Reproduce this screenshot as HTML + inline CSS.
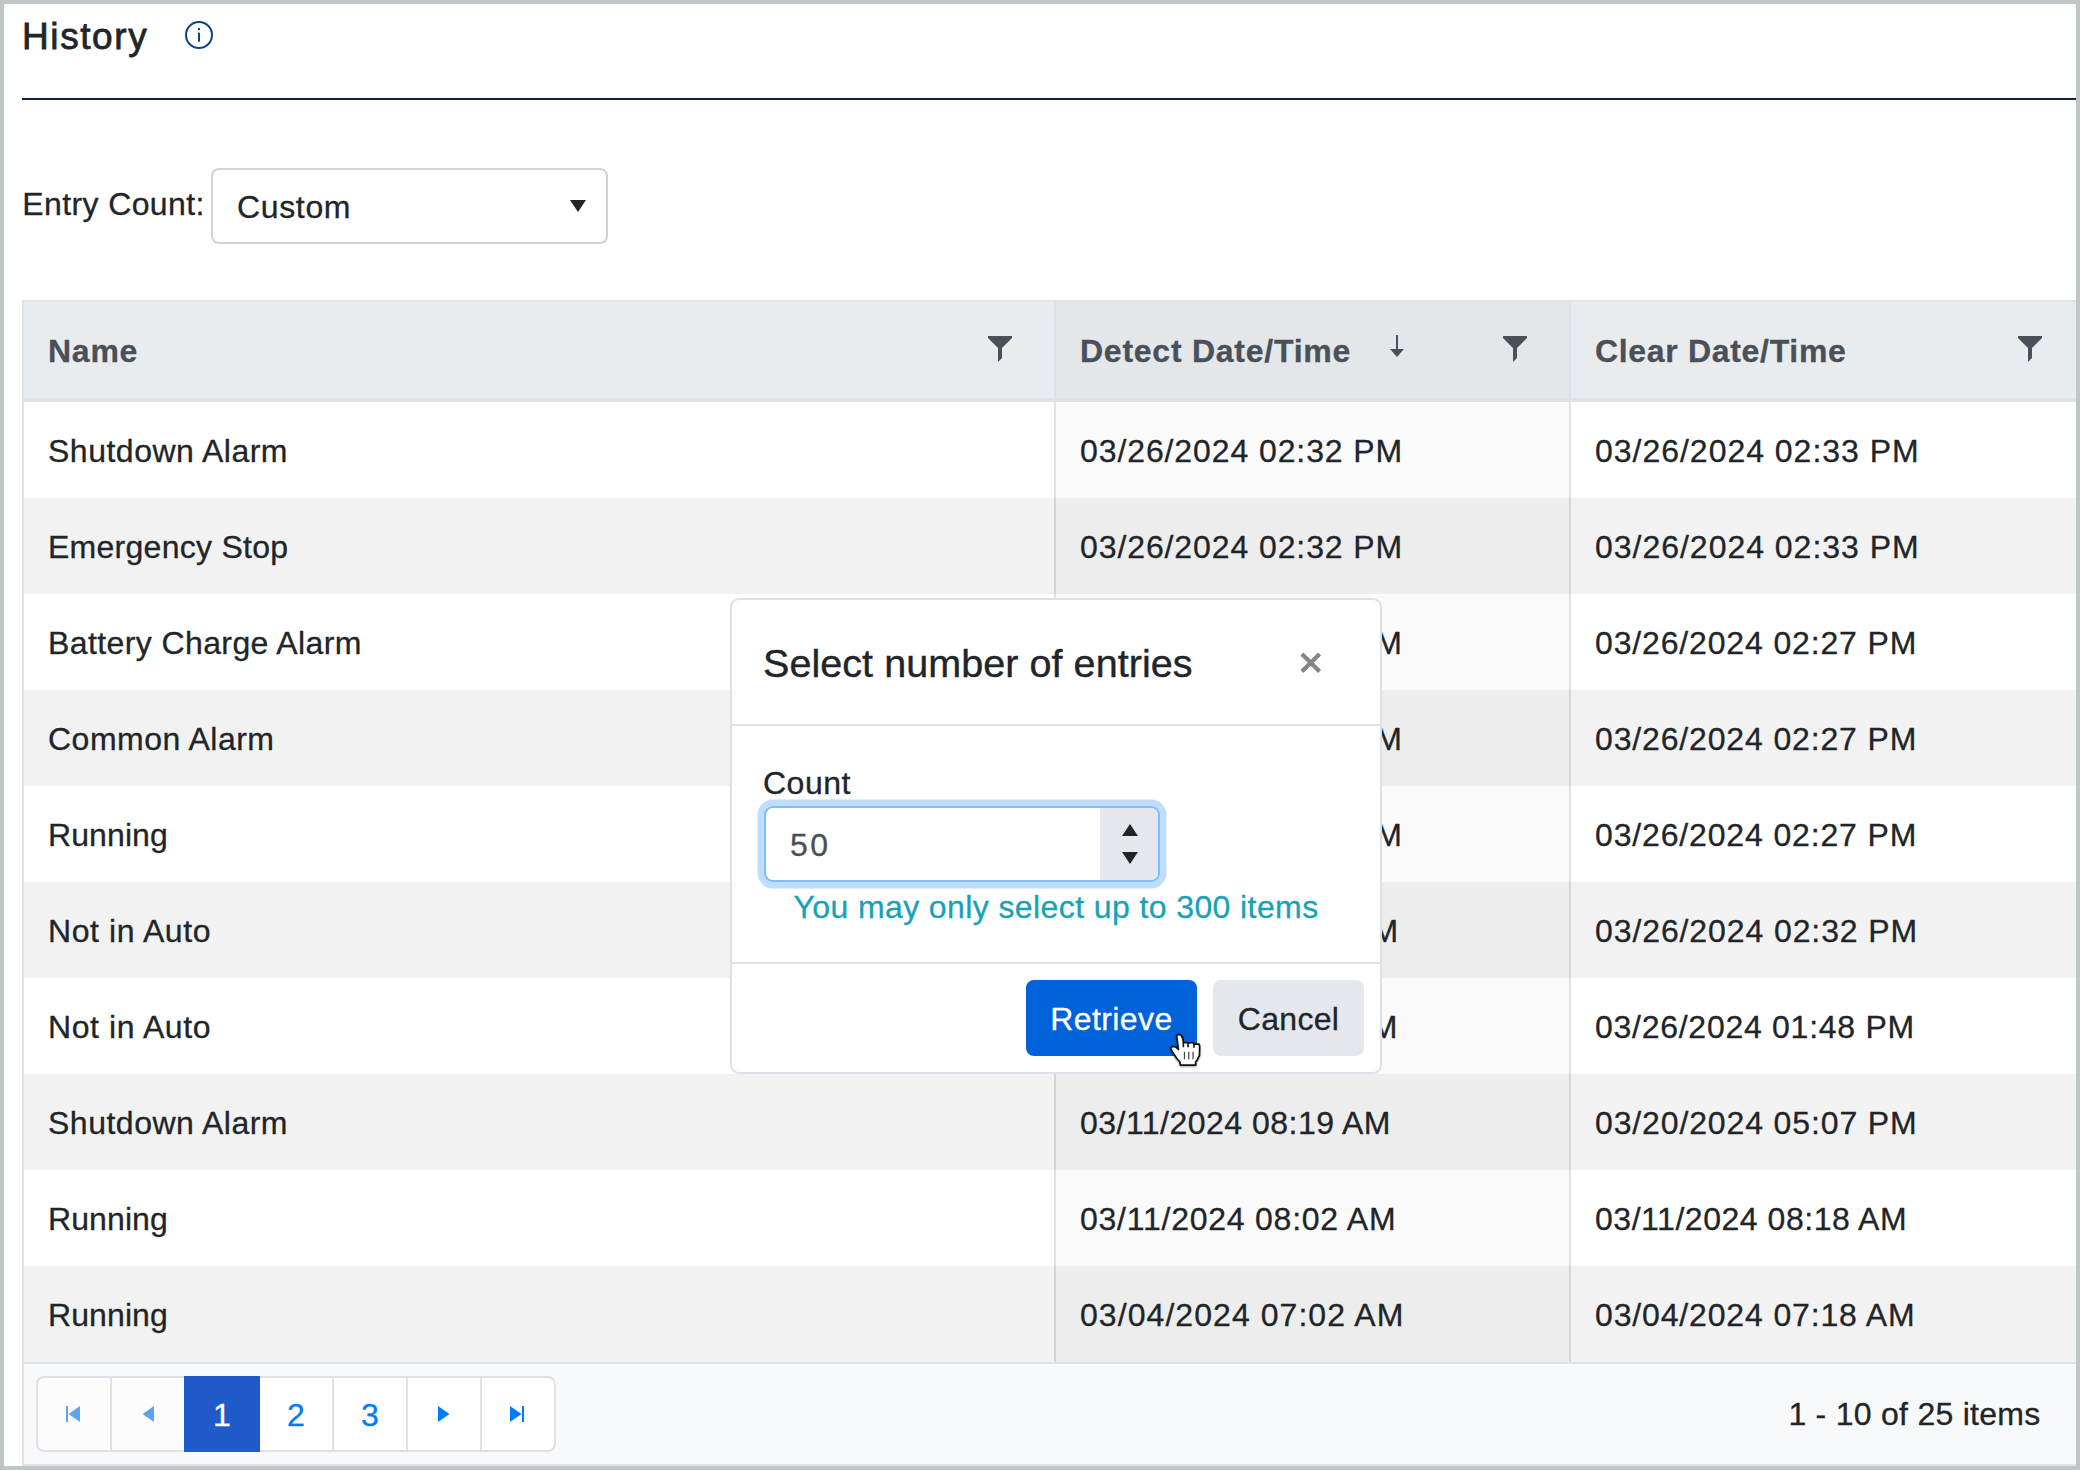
<!DOCTYPE html>
<html lang="en">
<head>
<meta charset="utf-8">
<title>History</title>
<style>
*{box-sizing:border-box;margin:0;padding:0}
html,body{width:2080px;height:1470px;overflow:hidden}
body{background:#c0c5c8;font-family:"Liberation Sans",sans-serif;font-size:32px;color:#212529;position:relative;-webkit-text-stroke-width:.3px}
#page{position:absolute;left:4px;top:4px;width:2072px;height:1462px;background:#fff;overflow:hidden}
.abs{position:absolute;white-space:nowrap}
/* title */
#title{left:18px;top:11px;font-size:37px;line-height:44px;letter-spacing:1.6px;-webkit-text-stroke:.8px #212529}
#info{left:180px;top:16px;width:30px;height:30px}
#hr{left:18px;top:94px;width:2060px;height:2px;background:#0d2240}
/* entry count */
#eclabel{left:18.200px;top:180px;line-height:40px;letter-spacing:.4px}
#select{left:207px;top:164px;width:397px;height:76px;border:2px solid #ced4da;border-radius:8px;background:#fff}
#select span{position:absolute;left:24px;top:17px;line-height:40px;letter-spacing:.65px}
#select i{position:absolute;left:357px;top:30px;width:0;height:0;border-left:8px solid transparent;border-right:8px solid transparent;border-top:12px solid #212529}
/* grid */
#grid{left:18px;top:296px;width:2060px;height:1166px;border:2px solid #e2e3e3;border-right:0;background:#fff}
table{border-collapse:separate;border-spacing:0;table-layout:fixed;width:2160px}
th,td{height:96px;padding:0 24px;text-align:left;vertical-align:middle;font-weight:400;border-left:2px solid #dee2e6;white-space:nowrap;position:relative}
th:first-child,td:first-child{border-left:0}
th{-webkit-text-stroke-width:.3px;height:100px;background:#e9ecef;color:#495057;font-weight:700;letter-spacing:.75px;border-bottom:4px solid #dee2e6;padding-top:2px}
th.sorted{background:#e4e7ea}
td{border-left-color:#e1e2e2}
tr.alt td{background:#f2f2f2;border-left-color:#d4d5d6}
td.sorted{background:#fafafa}
tr.alt td.sorted{background:#ededed}
td span{position:relative;top:1px;letter-spacing:.5px}
td.d span{letter-spacing:.9px}
th:last-child{letter-spacing:.68px}
.filter{position:absolute;right:38px;top:30px;width:32px;height:32px}
.sorticon{position:absolute;left:333px;top:33px;width:16px;height:24px}
/* pager */
#pagerbar{left:0;top:1060px;width:2058px;height:102px;background:#f8f9fa;border-top:2px solid #dee2e6}
#pager{left:12px;top:12px;height:76px;display:flex}
#pager div{width:76px;height:76px;border:2px solid #dee2e6;margin-left:-2px;background:#fff;color:#007bff;text-align:center;line-height:74px;position:relative}
#pager div:first-child{margin-left:0;border-radius:8px 0 0 8px}
#pager div:last-child{border-radius:0 8px 8px 0}
#pager div.dis{background:#fcfcfd}
#pager div.sel{background:#205bca;border-color:#205bca;color:#fff;z-index:2}
#pager svg{position:absolute;left:20px;top:20px;width:32px;height:32px}
#pinfo{right:41.500px;top:30px;line-height:40px;letter-spacing:.27px}
/* modal */
#modal{left:726px;top:594px;width:652px;height:476px;background:#fff;border:2px solid #dde0e5;border-radius:9px}
#mtitle{left:31px;top:38.500px;letter-spacing:.06px;-webkit-text-stroke:.4px #212529;font-size:39.5px;line-height:48px}
#mclose{left:566.500px;top:50.500px;width:23.500px;height:23.500px}
.mdiv{left:0;width:648px;height:2px;background:#dee2e6}
#mcount{left:31px;top:162.500px;letter-spacing:.5px;line-height:40px}
#minput{left:32px;top:206px;width:396px;height:76px;border:2px solid #80bdff;border-radius:9px;background:#fff;box-shadow:0 0 0 6.4px rgba(0,123,255,.25);overflow:hidden}
#minput span{position:absolute;left:24px;top:17px;line-height:40px;color:#495057;letter-spacing:2.5px}
#mspin{position:absolute;right:0;top:0;width:58px;height:72px;background:#e4e7eb}
#mspin i{position:absolute;left:22px;width:0;height:0;border-left:8px solid transparent;border-right:8px solid transparent}
#mspin i.u{top:16px;border-bottom:12px solid #212529}
#mspin i.d{top:44px;border-top:12px solid #212529}
#mhint{left:0;width:648px;text-align:center;top:286.5px;line-height:40px;color:#17a2b8;letter-spacing:.4px}
.btn{height:76px;border-radius:8px;line-height:79px;text-align:center}
#bret{left:294px;top:380px;width:171px;background:#0062d8;color:#fff;letter-spacing:.4px}
#bcan{left:481px;top:380px;width:151px;background:#e4e7eb;color:#212529;letter-spacing:.3px}
#cursor{left:1165px;top:1029.300px;width:33.330px;height:34.290px;filter:drop-shadow(0 1px 1px rgba(0,0,0,.35))}
</style>
</head>
<body>
<div id="page">
  <div class="abs" id="title">History</div>
  <svg class="abs" id="info" viewBox="0 0 30 30"><circle cx="15" cy="15" r="13" fill="none" stroke="#084487" stroke-width="2"/><rect x="14" y="12.700" width="2" height="9" fill="#084487"/><rect x="14" y="8.100" width="2" height="2" fill="#084487"/></svg>
  <div class="abs" id="hr"></div>
  <div class="abs" id="eclabel">Entry Count:</div>
  <div class="abs" id="select"><span>Custom</span><i></i></div>

  <div class="abs" id="grid">
    <table>
      <colgroup><col style="width:1030px"><col style="width:515px"><col style="width:615px"></colgroup>
      <thead><tr>
        <th>Name<svg class="filter" viewBox="0 0 512 512"><path fill="#495057" d="M64 64v32l160 160v224l64-64V256L448 96V64z"/></svg></th>
        <th class="sorted">Detect Date/Time<svg class="sorticon" viewBox="0 0 16 24"><path fill="#495057" d="M7 0h2v14h6l-7 8-7-8h6z"/></svg><svg class="filter" viewBox="0 0 512 512"><path fill="#495057" d="M64 64v32l160 160v224l64-64V256L448 96V64z"/></svg></th>
        <th>Clear Date/Time<svg class="filter" style="right:auto;left:443px" viewBox="0 0 512 512"><path fill="#495057" d="M64 64v32l160 160v224l64-64V256L448 96V64z"/></svg></th>
      </tr></thead>
      <tbody>
        <tr><td><span>Shutdown Alarm</span></td><td class="d sorted"><span style="letter-spacing:0.90px">03/26/2024 02:32 PM</span></td><td class="d"><span style="letter-spacing:0.98px">03/26/2024 02:33 PM</span></td></tr>
        <tr class="alt"><td><span style="letter-spacing:.27px">Emergency Stop</span></td><td class="d sorted"><span style="letter-spacing:0.90px">03/26/2024 02:32 PM</span></td><td class="d"><span style="letter-spacing:0.98px">03/26/2024 02:33 PM</span></td></tr>
        <tr><td><span style="letter-spacing:.4px">Battery Charge Alarm</span></td><td class="d sorted"><span style="letter-spacing:0.88px">03/26/2024 02:26 PM</span></td><td class="d"><span style="letter-spacing:0.85px">03/26/2024 02:27 PM</span></td></tr>
        <tr class="alt"><td><span>Common Alarm</span></td><td class="d sorted"><span style="letter-spacing:0.88px">03/26/2024 02:26 PM</span></td><td class="d"><span style="letter-spacing:0.85px">03/26/2024 02:27 PM</span></td></tr>
        <tr><td><span style="letter-spacing:.1px">Running</span></td><td class="d sorted"><span style="letter-spacing:0.88px">03/26/2024 02:26 PM</span></td><td class="d"><span style="letter-spacing:0.85px">03/26/2024 02:27 PM</span></td></tr>
        <tr class="alt"><td><span style="letter-spacing:.6px">Not in Auto</span></td><td class="d sorted"><span style="letter-spacing:0.68px">03/26/2024 02:26 PM</span></td><td class="d"><span style="letter-spacing:0.90px">03/26/2024 02:32 PM</span></td></tr>
        <tr><td><span style="letter-spacing:.6px">Not in Auto</span></td><td class="d sorted"><span style="letter-spacing:0.63px">03/26/2024 01:47 PM</span></td><td class="d"><span style="letter-spacing:0.73px">03/26/2024 01:48 PM</span></td></tr>
        <tr class="alt"><td><span>Shutdown Alarm</span></td><td class="d sorted"><span style="letter-spacing:0.48px">03/11/2024 08:19 AM</span></td><td class="d"><span style="letter-spacing:0.87px">03/20/2024 05:07 PM</span></td></tr>
        <tr><td><span style="letter-spacing:.1px">Running</span></td><td class="d sorted"><span style="letter-spacing:0.76px">03/11/2024 08:02 AM</span></td><td class="d"><span style="letter-spacing:0.54px">03/11/2024 08:18 AM</span></td></tr>
        <tr class="alt"><td><span style="letter-spacing:.1px">Running</span></td><td class="d sorted"><span style="letter-spacing:1.06px">03/04/2024 07:02 AM</span></td><td class="d"><span style="letter-spacing:0.85px">03/04/2024 07:18 AM</span></td></tr>
      </tbody>
    </table>
    <div class="abs" id="pagerbar">
      <div class="abs" id="pager">
        <div class="dis"><svg viewBox="0 0 32 32"><path fill="#5ea3f2" d="M8 8h2v16h-2zM22 8v16l-11.500-8z"/></svg></div>
        <div class="dis"><svg viewBox="0 0 32 32"><path fill="#5ea3f2" d="M22 8v16l-11.500-8z"/></svg></div>
        <div class="sel">1</div>
        <div>2</div>
        <div>3</div>
        <div><svg viewBox="0 0 32 32"><path fill="#007bff" d="M10 8v16l11.500-8z"/></svg></div>
        <div><svg viewBox="0 0 32 32"><path fill="#007bff" d="M20 8h2v16h-2zM8 8v16l11.500-8z"/></svg></div>
      </div>
      <div class="abs" id="pinfo">1 - 10 of 25 items</div>
    </div>
  </div>

  <div class="abs" id="modal">
    <div class="abs" id="mtitle">Select number of entries</div>
    <svg class="abs" id="mclose" viewBox="0 0 24 24"><path d="M3 3L21 21M21 3L3 21" stroke="#858585" stroke-width="4.4" fill="none"/></svg>
    <div class="abs mdiv" style="top:124px"></div>
    <div class="abs" id="mcount">Count</div>
    <div class="abs" id="minput"><span>50</span><div id="mspin"><i class="u"></i><i class="d"></i></div></div>
    <div class="abs" id="mhint">You may only select up to 300 items</div>
    <div class="abs mdiv" style="top:362px"></div>
    <div class="abs btn" id="bret">Retrieve</div>
    <div class="abs btn" id="bcan">Cancel</div>
  </div>
  <svg class="abs" id="cursor" viewBox="400 490 700 720"><path d="M560 545L600 518L648 532L690 600L702 692L790 690L800 702L900 690L930 722L1030 722L1044 762L1040 960L990 1060L960 1100L960 1165L640 1165L630 1100L560 1020L480 900L432 800L470 772L540 782L598 836Z" fill="#fff" stroke="#111" stroke-width="36" stroke-linejoin="round"/><path d="M725 885V1040M815 885V1040M905 885V1040" stroke="#444" stroke-width="26" fill="none"/><path d="M702 692V790M800 702V790M925 722V800" stroke="#111" stroke-width="34" fill="none"/></svg>
</div>
</body>
</html>
